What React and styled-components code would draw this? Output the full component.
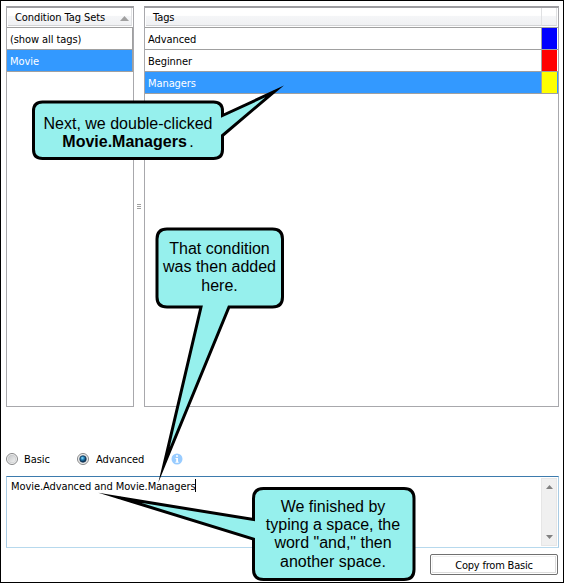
import React from 'react';
import styled, { createGlobalStyle } from 'styled-components';

const GlobalStyle = createGlobalStyle`
  * { box-sizing: border-box; }
  body { margin: 0; background: #fff; overflow: hidden; }
`;

const Frame = styled.main`
  position: relative;
  width: 564px;
  height: 583px;
  border: 1px solid #000;
  background: #fff;
  padding: 5px 4px 0 5px;
  display: flex;
  flex-direction: column;
  overflow: hidden;
  font: 11px/14px 'DejaVu Sans Condensed', 'DejaVu Sans', sans-serif;
  color: #000;
`;

const Panels = styled.section`
  display: grid;
  grid-template-columns: 128px 10px 415px;
  height: 401px;
`;

const Panel = styled.div`
  border: 1px solid #a8a8ac;
  border-top: 2px solid #9d9da1;
  min-width: 0;
`;

const HeaderRow = styled.div`
  display: flex;
  height: 20px;
  padding: 0 1px 1px 1px;
  border-bottom: 1px solid #a0a0a0;
  background: #fff;
`;

const HeaderCell = styled.div`
  display: flex;
  align-items: center;
  justify-content: space-between;
  width: ${(p) => p.$width || 'auto'};
  flex: ${(p) => (p.$width ? 'none' : 1)};
  height: 18px;
  padding: 3px 2px 0 ${(p) => p.$indent || 0}px;
  border-right: 1px solid #e0e1e3;
  border-bottom: 1px solid #d2d3d5;
  background: linear-gradient(#fff 0 44%, #f5f6f8 45%, #f0f1f3);
`;

const Row = styled.div`
  display: flex;
  height: 22px;
  border-bottom: 1px solid #a0a0a0;
  background: ${(p) => (p.$selected ? '#3399ff' : '#fff')};
  color: ${(p) => (p.$selected ? '#fff' : '#000')};
`;

const RowLabel = styled.div`
  flex: 1;
  padding: 5px 0 0 3px;
  border-right: 1px solid #a0a0a0;
`;

const Swatch = styled.div`
  width: 15px;
  margin-right: 1px;
  background: ${(p) => p.$color};
`;

const Text = styled.span`
  white-space: nowrap;
  letter-spacing: ${(p) => p.$track ?? -0.08}px;
`;

const Grip = styled.div`
  align-self: start;
  justify-self: center;
  width: 4px;
  height: 5px;
  margin: 198px 0 0 0;
  background: repeating-linear-gradient(#a0a0a0 0 1px, #fff 1px 2px);
`;

const Options = styled.div`
  display: flex;
  align-items: center;
  height: 16px;
  margin-top: 44px;
`;

const Option = styled.label`
  display: flex;
  align-items: center;
  gap: ${(p) => p.$gap}px;
  width: ${(p) => p.$width}px;

  ${Text} {
    padding-top: 1px;
  }
`;

const Editor = styled.div`
  display: flex;
  justify-content: space-between;
  width: 553px;
  height: 72px;
  margin-top: 9px;
  border: 1px solid #a9cbe3;
  border-top-color: #3d7bad;
  border-bottom-color: #b7d9ed;
  padding: 1px;
`;

const EditorText = styled.div`
  display: flex;
  align-items: flex-start;
  padding: 2px 0 0 3px;
`;

const Caret = styled.span`
  width: 1px;
  height: 13px;
  margin: -1px 0 0 -1px;
  background: #000;
`;

const Scrollbar = styled.div`
  display: flex;
  flex-direction: column;
  justify-content: space-between;
  align-items: center;
  width: 16px;
  padding: 6px 0 6px;
  border: 1px solid #e6e6e6;
  background: #f0f0f0;
`;

const Button = styled.button`
  align-self: flex-end;
  width: 128px;
  height: 21px;
  margin: 6px 1px 0 0;
  padding: 2px 0 0;
  border: 1px solid #707070;
  border-radius: 2px;
  background: #fff;
  box-shadow: inset 0 0 0 1px #fff, inset -1px -1px 0 1px #dcdcdc, inset 1px 1px 0 1px #f0f0f0;
  font: inherit;
  color: #000;
`;

const Overlay = styled.svg`
  position: absolute;
  left: -1px;
  top: -1px;
  width: 564px;
  height: 583px;
`;

const Callout = styled.div`
  position: absolute;
  left: ${(p) => p.$x - 1}px;
  top: ${(p) => p.$y - 1}px;
  width: ${(p) => p.$w}px;
  display: flex;
  flex-direction: column;
  align-items: center;
  font: 16px/18px 'Liberation Sans', Arial, sans-serif;
`;

const Line = styled.div`
  height: ${(p) => p.$h || 18}px;
  white-space: nowrap;
  word-spacing: ${(p) => p.$word || 0}px;
`;

function Radio({ checked }) {
  return (
    <svg width="12" height="12" viewBox="0 0 12 12">
      <defs>
        <linearGradient id="ring" x1="0" y1="0" x2="1" y2="1">
          <stop offset="0" stopColor="#c4c6c8" />
          <stop offset="1" stopColor="#f4f4f4" />
        </linearGradient>
        <radialGradient id="dot" cx=".4" cy=".35" r=".6">
          <stop offset="0" stopColor="#9fe4fb" />
          <stop offset=".4" stopColor="#2a8fc8" />
          <stop offset="1" stopColor="#0b2c4c" />
        </radialGradient>
      </defs>
      <circle cx="6" cy="6" r="5.5" fill="#f6f6f6" stroke="#858687" />
      <circle cx="6" cy="6" r="3.9" fill="url(#ring)" stroke="#c2c4c6" strokeWidth=".6" />
      {checked && <circle cx="6" cy="6" r="3.2" fill="url(#dot)" stroke="#12395b" strokeWidth=".8" />}
    </svg>
  );
}

function InfoIcon() {
  return (
    <svg width="12" height="12" viewBox="0 0 12 12">
      <circle cx="6" cy="6" r="5.5" fill="#99ccff" />
      <path d="M5 2.3h2v1.5H5zM4.5 5h2.5v3.8h.7v.9H4.4v-.9h.8V5.9h-.7z" fill="#fff" />
    </svg>
  );
}

function Arrow({ down, width = 7, height = 4, fill = '#808080' }) {
  const d = down ? `M0 0H${width}L${width / 2} ${height}Z` : `M0 ${height}H${width}L${width / 2} 0Z`;
  return (
    <svg width={width} height={height}>
      <path d={d} fill={fill} />
    </svg>
  );
}

const tags = [
  { name: 'Advanced', color: '#0000ff' },
  { name: 'Beginner', color: '#ff0000' },
  { name: 'Managers', color: '#ffff00', selected: true },
];

const balloons = [
  'M42.5 102H213.5Q222.5 102 222.5 111V115.5L274.5 91.5L222.5 135.5V149.5Q222.5 158.5 213.5 158.5H42.5Q33.5 158.5 33.5 149.5V111Q33.5 102 42.5 102Z',
  'M167 229H272.5Q282.5 229 282.5 239V297Q282.5 307 272.5 307H229L164 465L201 307H167Q157 307 157 297V239Q157 229 167 229Z',
  'M263.5 488.5H404Q414 488.5 414 498.5V569.5Q414 579.5 404 579.5H263.5Q253.5 579.5 253.5 569.5V539L119.5 497.8L253.5 519.5V498.5Q253.5 488.5 263.5 488.5Z',
];

export default function App() {
  return (
    <>
      <GlobalStyle />
      <Frame>
        <Panels>
          <Panel>
            <HeaderRow>
              <HeaderCell $indent={7}>
                <Text>Condition Tag Sets</Text>
                <Arrow width={9} height={5} fill="#a0a0a0" />
              </HeaderCell>
            </HeaderRow>
            <Row>
              <RowLabel><Text>(show all tags)</Text></RowLabel>
            </Row>
            <Row $selected>
              <RowLabel><Text>Movie</Text></RowLabel>
            </Row>
          </Panel>
          <Grip />
          <Panel>
            <HeaderRow>
              <HeaderCell $indent={7}><Text>Tags</Text></HeaderCell>
              <HeaderCell $width="15px" />
            </HeaderRow>
            {tags.map((t) => (
              <Row key={t.name} $selected={t.selected}>
                <RowLabel><Text>{t.name}</Text></RowLabel>
                <Swatch $color={t.color} />
              </Row>
            ))}
          </Panel>
        </Panels>
        <Options>
          <Option $width={71} $gap={6}><Radio /><Text>Basic</Text></Option>
          <Option $width={94} $gap={7}><Radio checked /><Text>Advanced</Text></Option>
          <InfoIcon />
        </Options>
        <Editor>
          <EditorText>
            <Text>Movie.Advanced and Movie.Managers</Text>
            <Caret />
          </EditorText>
          <Scrollbar>
            <Arrow />
            <Arrow down />
          </Scrollbar>
        </Editor>
        <Button><Text $track={-0.2}>Copy from Basic</Text></Button>

        <Overlay viewBox="0 0 564 583">
          {balloons.map((d) => (
            <path key={d} d={d} fill="#96f0ed" stroke="#000" strokeWidth="3" strokeMiterlimit="40" />
          ))}
        </Overlay>
        <Callout $x={33} $y={115} $w={190}>
          <Line>Next, we double-clicked</Line>
          <Line $word={-2}><strong>Movie.Managers</strong> .</Line>
        </Callout>
        <Callout $x={157} $y={240} $w={125}>
          <Line>That condition</Line>
          <Line $h={19}>was then added</Line>
          <Line>here.</Line>
        </Callout>
        <Callout $x={253} $y={498} $w={160}>
          <Line>We finished by</Line>
          <Line>typing a space, the</Line>
          <Line $h={19}>word "and," then</Line>
          <Line>another space.</Line>
        </Callout>
      </Frame>
    </>
  );
}
